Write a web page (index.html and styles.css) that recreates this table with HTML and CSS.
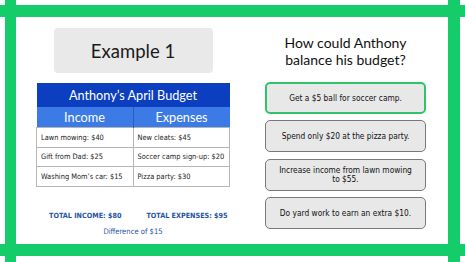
FILE: index.html
```html
<!DOCTYPE html>
<html>
<head>
<meta charset="utf-8">
<link rel="stylesheet" href="styles.css">
</head>
<body>
<div class="stage">
  <div class="line line-top"></div>
  <div class="line line-bottom"></div>
  <div class="line line-left"></div>
  <div class="line line-right"></div>
  <div class="content">
    <div class="left">
      <div class="example">Example 1</div>
      <table class="budget">
        <tr><th colspan="2" class="title">Anthony’s April Budget</th></tr>
        <tr><th class="head">Income</th><th class="head">Expenses</th></tr>
        <tr><td>Lawn mowing: $40</td><td>New cleats: $45</td></tr>
        <tr><td>Gift from Dad: $25</td><td>Soccer camp sign-up: $20</td></tr>
        <tr><td>Washing Mom’s car: $15</td><td>Pizza party: $30</td></tr>
      </table>
      <div class="totals">
        <span class="tot-inc">TOTAL INCOME: $80</span>
        <span class="tot-exp">TOTAL EXPENSES: $95</span>
      </div>
      <div class="diff">Difference of $15</div>
    </div>
    <div class="right">
      <div class="question">How could Anthony<br>balance his budget?</div>
      <div class="options">
        <div class="opt selected">Get a $5 ball for soccer camp.</div>
        <div class="opt">Spend only $20 at the pizza party.</div>
        <div class="opt">Increase income from lawn mowing<br>to $55.</div>
        <div class="opt">Do yard work to earn an extra $10.</div>
      </div>
    </div>
  </div>
</div>
</body>
</html>
```
FILE: styles.css
```css
html, body {
  margin: 0;
  padding: 0;
  background: #ffffff;
}
.stage {
  width: 465px;
  height: 262px;
  display: grid;
  grid-template-columns: 5px 11px 432px 12px 5px;
  grid-template-rows: 5px 12px 227px 12px 6px;
  overflow: hidden;
}
.line { background: #14cc6a; }
.line-top { grid-column: 1 / 6; grid-row: 2; }
.line-bottom { grid-column: 1 / 6; grid-row: 4; }
.line-left { grid-column: 2; grid-row: 1 / 6; }
.line-right { grid-column: 4; grid-row: 1 / 6; }
.content {
  grid-column: 3;
  grid-row: 3;
  display: flex;
  padding-top: 11px;
  padding-left: 20px;
  box-sizing: border-box;
}
.left {
  width: 194px;
  display: flex;
  flex-direction: column;
  align-items: center;
}
.example {
  width: 159px;
  height: 45px;
  background: #e9e9e9;
  border-radius: 4px;
  display: flex;
  align-items: center;
  justify-content: center;
  font-family: "Lato", "DejaVu Sans", sans-serif;
  font-size: 18.5px;
  color: #1a1a1a;
}
.budget {
  margin-top: 10px;
  width: 194px;
  border-collapse: collapse;
  font-family: "DejaVu Sans Condensed", "DejaVu Sans", sans-serif;
}
.budget th {
  color: #ffffff;
  font-family: "Lato", "DejaVu Sans", sans-serif;
  font-weight: 400;
  padding: 0;
}
.budget .title {
  background: #0b3fbf;
  height: 24px;
  font-size: 12.7px;
}
.budget .head {
  background: #3c7ae6;
  height: 20px;
  font-size: 12.7px;
  width: 50%;
  border-left: 1px solid #2c5cc0;
}
.budget .head:first-child { border-left: none; }
.budget td {
  border: 1px solid #b5b5b5;
  height: 18.5px;
  padding: 0 0 0 4px;
  font-size: 7.4px;
  color: #1a1a1a;
  white-space: nowrap;
}
.totals {
  margin-top: 24px;
  width: 194px;
  display: flex;
  white-space: nowrap;
  font-family: "DejaVu Sans Condensed", "DejaVu Sans", sans-serif;
  font-weight: bold;
  font-size: 7.2px;
  line-height: 9px;
  color: #2753a3;
}
.tot-inc { margin-left: 13px; }
.tot-exp { margin-left: 25px; }
.diff {
  margin-top: 7px;
  white-space: nowrap;
  font-family: "DejaVu Sans Condensed", "DejaVu Sans", sans-serif;
  font-size: 7.6px;
  line-height: 9px;
  color: #2753a3;
}
.right {
  margin-left: 35px;
  width: 161px;
  display: flex;
  flex-direction: column;
  align-items: center;
}
.question {
  font-family: "Lato", "DejaVu Sans", sans-serif;
  font-size: 14px;
  line-height: 17px;
  text-align: center;
  color: #111;
  margin-top: 6px;
}
.options {
  margin-top: 14px;
  display: flex;
  flex-direction: column;
  gap: 6.3px;
  width: 161px;
}
.opt {
  height: 32px;
  box-sizing: border-box;
  border: 1px solid #7a7a7a;
  border-radius: 5px;
  background: #e8e8e8;
  display: flex;
  align-items: center;
  justify-content: center;
  text-align: center;
  font-family: "DejaVu Sans Condensed", "DejaVu Sans", sans-serif;
  font-size: 8.3px;
  line-height: 8.5px;
  color: #111;
}
.opt.selected {
  border: 2px solid #2ec46a;
}
```
